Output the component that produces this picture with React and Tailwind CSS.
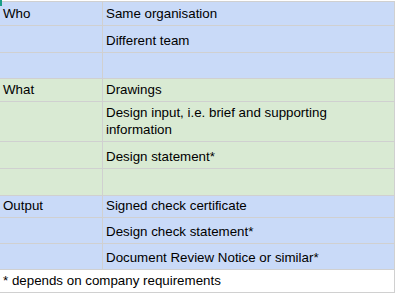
import React from 'react'

const sections = [
  {
    bg: 'bg-[#c9daf8]',
    rows: [
      { label: 'Who', text: 'Same organisation', h: 'h-[24px]' },
      { label: '', text: 'Different team', h: 'h-[27px]' },
      { label: '', text: '', h: 'h-[26px]' },
    ],
  },
  {
    bg: 'bg-[#d9ead3]',
    rows: [
      { label: 'What', text: 'Drawings', h: 'h-[23px]' },
      { label: '', text: 'Design input, i.e. brief and supporting information', h: 'h-[40px]' },
      { label: '', text: 'Design statement*', h: 'h-[27px]' },
      { label: '', text: '', h: 'h-[27px]' },
    ],
  },
  {
    bg: 'bg-[#c9daf8]',
    rows: [
      { label: 'Output', text: 'Signed check certificate', h: 'h-[22px]' },
      { label: '', text: 'Design check statement*', h: 'h-[26px]' },
      { label: '', text: 'Document Review Notice or similar*', h: 'h-[26px]' },
    ],
  },
]

const Row = ({ bg, label, text, h }) => (
  <div className={`flex ${h} ${bg} border-b border-[#d0d0d0]`}>
    <div className="w-[103px] shrink-0 border-r border-[#d0d0d0] flex items-end pl-[3px] pb-[3px]">
      {label}
    </div>
    <div className="flex-1 flex items-end pl-[3px] pb-[3px] pr-1">
      <span>{text}</span>
    </div>
  </div>
)

export default function App() {
  return (
    <div className="relative w-[397px] h-[296px] bg-white text-black text-[13.33px] leading-[17px] font-['Liberation_Sans',Arial,sans-serif]">
      <div className="absolute left-0 top-0 w-[2px] h-[6px] bg-[#1a9e86]" />
      <div className="pt-[1px]">
        <div className="w-[395px] border-t border-r border-[#d0d0d0]">
          {sections.map((s, i) =>
            s.rows.map((r, j) => (
              <Row key={`${i}-${j}`} bg={s.bg} label={r.label} text={r.text} h={r.h} />
            ))
          )}
          <div className="h-[23px] flex items-end pl-[3px] pb-[3px] border-b border-[#d0d0d0] bg-white">
            * depends on company requirements
          </div>
        </div>
      </div>
    </div>
  )
}
